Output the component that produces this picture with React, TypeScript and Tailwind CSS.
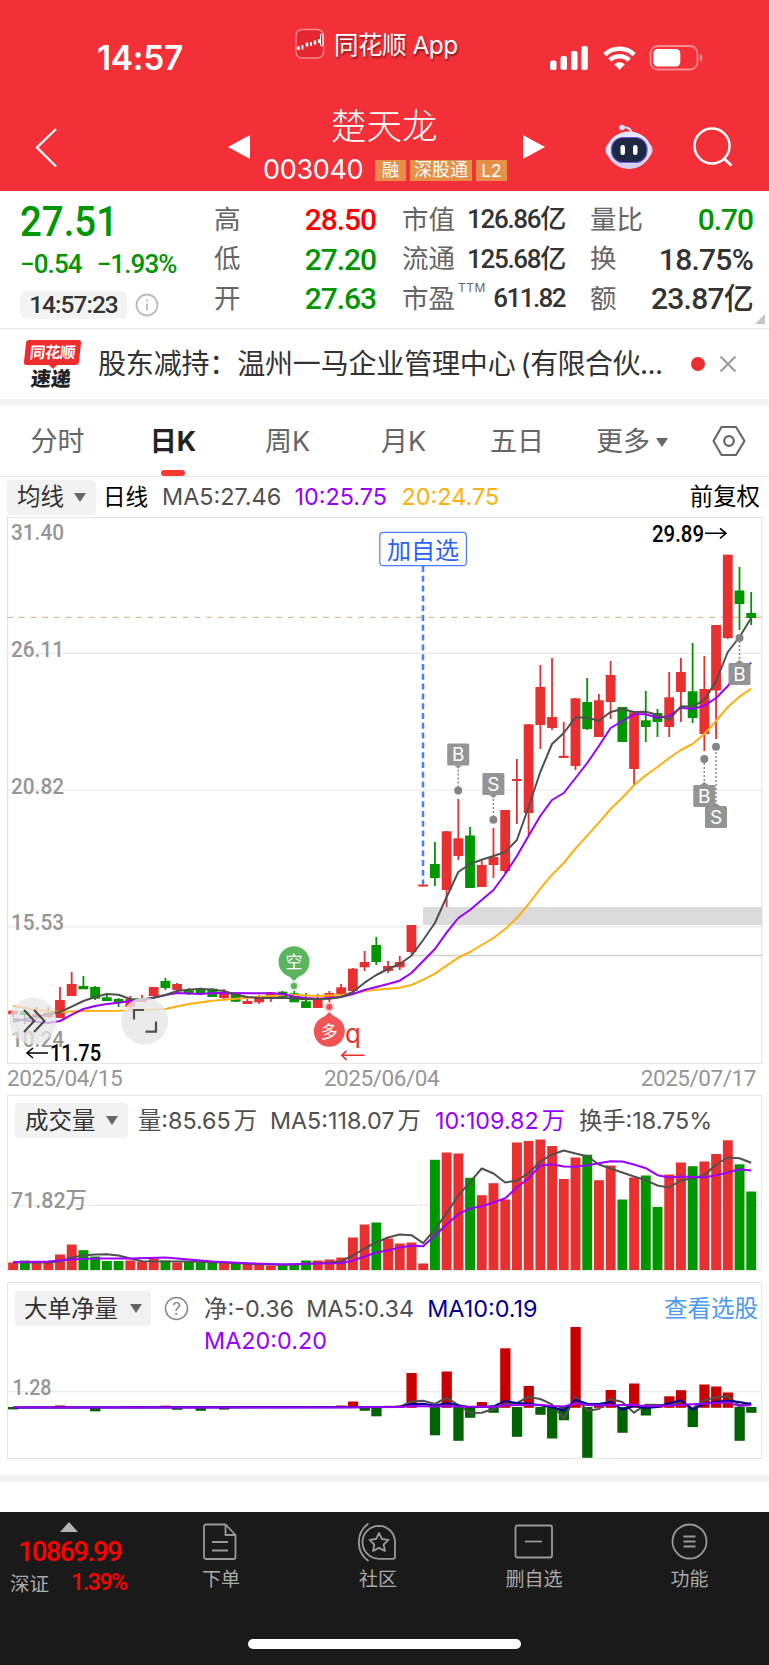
import type { ReactNode } from 'react';
import { clsx } from 'clsx';

const RED = '#e93030';
const GREEN = '#009600';
const GRAY = '#505050';
const PURPLE = '#9900ff';
const ORANGE = '#ffb010';

const STEP = 11.716;
const xAt = (i: number) => 13.1 + STEP * i;

type Dir = 'r' | 'g';
// [direction, high, low, body top, body bottom]
type Candle = [Dir, number, number, number, number];
type Point = [number, number];

const candles: Candle[] = [
    ['r', 1010, 1017, 1010.7, 1014.3],
    ['g', 1010, 1024, 1011.3, 1015],
    ['r', 1007, 1020, 1014, 1018],
    ['r', 1007, 1018, 1013, 1017],
    ['r', 987, 1018, 1000, 1018],
    ['r', 972, 996, 984, 996],
    ['g', 976, 989, 986, 989.3],
    ['g', 986, 1000, 987, 998.7],
    ['g', 995, 1001, 997.3, 1001],
    ['g', 998, 1007, 999, 1003],
    ['r', 996, 1009, 999, 1007],
    ['r', 995, 1002, 999, 1002],
    ['r', 987, 997, 987, 996],
    ['g', 978, 990, 981, 988],
    ['r', 983, 991, 984, 990],
    ['g', 988, 995, 990, 994],
    ['g', 989, 994, 990, 994],
    ['g', 988, 997, 988.7, 997],
    ['r', 989, 999, 992, 998],
    ['g', 993, 1002, 994, 1001.7],
    ['r', 999, 1004, 1001, 1004],
    ['r', 995, 1004, 998, 1002.3],
    ['r', 992, 1002, 992.3, 996.7],
    ['g', 991, 998, 991.7, 998],
    ['g', 991, 1002, 993.3, 1002.3],
    ['g', 993, 1008, 1001.3, 1008],
    ['r', 994, 1008, 998.7, 1008],
    ['r', 991, 1002, 993, 999],
    ['r', 984, 995, 987.3, 994],
    ['r', 968, 992, 968.7, 991],
    ['r', 951, 971, 962, 967.3],
    ['g', 937, 965, 945, 962],
    ['r', 961, 973, 966, 971],
    ['r', 956, 970, 962, 967.3],
    ['r', 925, 954, 925, 952],
    ['r', 884.5, 886.5, 884.5, 886.5],
    ['g', 842, 886, 864, 878],
    ['r', 831, 907, 831.3, 890],
    ['r', 799, 860, 838.3, 856],
    ['g', 827, 888, 835.5, 888],
    ['r', 861, 887, 865, 887],
    ['r', 828, 878, 857, 865],
    ['r', 810, 873, 810, 871],
    ['r', 759, 824, 779, 781],
    ['r', 724, 835, 724.3, 813],
    ['r', 665, 749, 687, 725],
    ['r', 658, 730, 717, 728],
    ['r', 722, 758, 755.8, 758],
    ['r', 698, 770, 698.3, 766],
    ['g', 678, 730, 702, 729],
    ['r', 694, 737, 700.3, 737],
    ['r', 661, 719, 675, 702],
    ['g', 707, 742, 707, 742],
    ['r', 712, 785, 712.3, 769],
    ['g', 691, 742, 720.3, 727],
    ['g', 709, 737, 713, 722],
    ['r', 672, 737, 697.3, 727],
    ['r', 658, 722, 672, 692],
    ['g', 643, 723, 691.3, 718],
    ['r', 656, 751, 689, 734],
    ['r', 625, 739, 625, 690.5],
    ['r', 554.7, 639, 554.7, 638],
    ['g', 567, 630, 590.5, 604],
    ['g', 592, 625, 613, 618],
];

const priceMa5: Point[] = [
    [0, 1021.7], [3, 1014], [4, 1012], [5, 1006.7], [6, 1001], [7, 997], [8, 994], [9, 994.7], [10, 999], [11, 999.5],
    [12, 997.7], [13, 995], [14, 991], [15, 989.7], [16, 988.7], [17, 989.7], [18, 991], [19, 994.7], [20, 997], [21, 998],
    [23, 997.7], [25, 999.3], [27, 998.7], [28, 997], [29, 992], [30, 982.7], [31, 975], [32, 969], [33, 964], [34, 955.7],
    [35, 940], [36, 923], [37, 897], [38, 872], [39, 864], [40, 859.7], [41, 856], [42, 852], [43, 840], [44, 807],
    [45, 772], [46, 744], [47, 733], [48, 717.3], [49, 717.7], [50, 720.7], [51, 712], [52, 709], [53, 712], [54, 711.7],
    [55, 714.7], [56, 719.7], [57, 706.3], [58, 706.7], [59, 700], [60, 681], [61, 652], [62, 637], [63, 618],
];
const priceMa10: Point[] = [
    [0, 1019], [3, 1023], [4, 1021], [5, 1014.7], [6, 1009], [7, 1006], [8, 1004], [9, 1002.7], [10, 1001], [11, 999.7],
    [12, 997.7], [13, 995], [14, 993], [16, 994], [17, 993], [22, 993.3], [23, 994], [24, 996.7], [25, 998], [26, 998.7],
    [27, 998], [28, 997], [29, 994], [30, 990], [31, 987], [32, 984], [33, 980.7], [34, 973], [35, 961], [36, 949],
    [37, 932.7], [38, 918], [39, 910], [40, 900], [41, 890], [42, 874], [43, 856], [44, 835.7], [45, 816], [46, 800],
    [47, 793], [48, 778], [49, 763], [50, 746], [51, 728], [52, 721], [53, 714.3], [54, 714.3], [55, 717.7], [56, 716],
    [57, 707.7], [58, 709], [59, 705.7], [60, 698], [61, 686], [62, 672], [63, 662.7],
];
const priceMa20: Point[] = [
    [0, 1006], [2, 1010], [4, 1012], [6, 1011], [9, 1010.7], [11, 1009.7], [13, 1009], [15, 1004], [17, 1000.7], [19, 998.7],
    [21, 996.7], [23, 995], [24, 995], [26, 996], [28, 995], [29, 993.7], [30, 991], [31, 989.7], [33, 987.7], [34, 985],
    [35, 979.7], [36, 973.7], [37, 965.7], [38, 957.7], [39, 952], [40, 945], [41, 938], [42, 929], [43, 918], [44, 904],
    [45, 888.7], [46, 874.7], [47, 863], [48, 848.5], [49, 835.7], [50, 822.7], [51, 809], [52, 797.7], [53, 785.3], [54, 775.3],
    [55, 767], [56, 758], [57, 750], [58, 744], [59, 734], [60, 721], [61, 707], [62, 696.7], [63, 688.7],
];

const volumes: [Dir, number][] = [
    ['r', 1262], ['g', 1260], ['r', 1262], ['r', 1261], ['r', 1254], ['r', 1244], ['g', 1249.7], ['g', 1256],
    ['g', 1260.5], ['g', 1260.5], ['r', 1260], ['r', 1261], ['r', 1258], ['g', 1260], ['r', 1262], ['g', 1261],
    ['g', 1262], ['g', 1262], ['r', 1262], ['g', 1263], ['r', 1263], ['r', 1264], ['r', 1265], ['g', 1264],
    ['g', 1264], ['g', 1260], ['r', 1260], ['r', 1259], ['r', 1257], ['r', 1237], ['r', 1224], ['g', 1222],
    ['r', 1238], ['r', 1243], ['r', 1242], ['r', 1263], ['g', 1159.3], ['r', 1152], ['r', 1153], ['g', 1177.3],
    ['r', 1194.7], ['r', 1182.7], ['r', 1199], ['r', 1142], ['r', 1140.5], ['r', 1139], ['r', 1145.5], ['r', 1178.5],
    ['r', 1157], ['g', 1154.2], ['r', 1179.7], ['r', 1165], ['g', 1199], ['r', 1177], ['g', 1175], ['g', 1206.5],
    ['r', 1174], ['r', 1162], ['g', 1165.7], ['r', 1161], ['r', 1153.5], ['r', 1139.8], ['g', 1163.8], ['g', 1191],
];
const volMa5: Point[] = [
    [0, 1261.7], [3, 1262], [4, 1261], [5, 1257], [6, 1255], [7, 1254], [8, 1253.7], [9, 1255], [10, 1258], [11, 1260.7],
    [15, 1261], [18, 1262], [20, 1263.3], [22, 1264], [24, 1264], [26, 1262.7], [27, 1262], [28, 1261], [29, 1255], [30, 1248],
    [31, 1241.7], [32, 1237], [33, 1234], [34, 1234.7], [35, 1242.7], [36, 1229], [37, 1212.7], [38, 1195], [39, 1181.7], [40, 1168],
    [41, 1173], [42, 1182], [43, 1180], [44, 1172.7], [45, 1161], [46, 1154], [47, 1150], [48, 1153], [49, 1155.7], [50, 1164],
    [51, 1168], [52, 1172], [53, 1176], [54, 1179.7], [55, 1185], [56, 1187], [57, 1180], [58, 1177.7], [59, 1175], [60, 1164],
    [61, 1157], [62, 1157.7], [63, 1162.3],
];
const volMa10: Point[] = [
    [0, 1261.7], [3, 1261], [5, 1259], [7, 1258], [10, 1258], [13, 1257], [14, 1258], [15, 1259], [17, 1261], [20, 1262.7],
    [23, 1264], [26, 1263], [28, 1262.7], [29, 1260], [30, 1256], [31, 1252], [32, 1250], [33, 1247], [34, 1245.3], [35, 1245.7],
    [36, 1235], [37, 1224], [38, 1213.7], [39, 1208], [40, 1205.7], [41, 1202], [42, 1197.7], [43, 1187], [44, 1177.7], [45, 1165],
    [46, 1163.7], [47, 1166], [48, 1166.3], [49, 1164.7], [50, 1162.7], [51, 1160.7], [52, 1161], [53, 1164], [54, 1167.7], [55, 1174.7],
    [56, 1177], [57, 1176], [59, 1177], [60, 1174.7], [61, 1172], [62, 1168.7], [63, 1170],
];

// net order flow: slot index -> bar end, measured from the zero line
const netFlow: Point[] = [
    [0, 1408.6], [2, 1406.7], [4, 1405.5], [7, 1410.6], [10, 1406.5], [11, 1406], [13, 1405.7], [14, 1409], [16, 1410], [18, 1408.8],
    [26, 1406.5], [28, 1405.5], [29, 1401.5], [30, 1410], [31, 1415.5], [32, 1405.8], [33, 1405.5], [34, 1373], [36, 1434.5], [37, 1371.5],
    [38, 1440], [39, 1417], [40, 1402], [41, 1412], [42, 1348.3], [43, 1436], [44, 1386], [45, 1414], [46, 1437.7], [47, 1419.5],
    [48, 1327], [49, 1457], [50, 1405], [51, 1390], [52, 1432], [53, 1383.5], [54, 1414.7], [55, 1406], [56, 1396.3], [57, 1390.2],
    [58, 1426.3], [59, 1384.5], [60, 1386.5], [61, 1392.5], [62, 1440], [63, 1412],
];
const netMa5: Point[] = [
    [0, 1407.5], [33, 1407], [34, 1401.5], [35, 1400.7], [36, 1404], [37, 1397.7], [38, 1405], [39, 1413], [40, 1412.7], [41, 1409],
    [42, 1404.3], [43, 1403], [44, 1397], [45, 1399], [46, 1404.3], [47, 1418.7], [48, 1397], [49, 1410.7], [50, 1409], [51, 1399],
    [52, 1402], [53, 1412.7], [54, 1404.7], [56, 1405], [57, 1401], [58, 1408.3], [59, 1400.3], [60, 1397.3], [61, 1396.3], [62, 1405],
    [63, 1403],
];
const netMa10: Point[] = [
    [0, 1407.5], [33, 1407], [34, 1404], [35, 1403.7], [36, 1405.7], [37, 1403], [38, 1405.3], [39, 1407.3], [41, 1406.3], [42, 1401],
    [43, 1403], [44, 1403.7], [45, 1405.3], [46, 1407.3], [47, 1410.7], [48, 1399.7], [49, 1403.7], [50, 1404], [51, 1402], [52, 1409.7],
    [53, 1405.7], [54, 1408], [55, 1407], [56, 1403.3], [57, 1400.3], [58, 1409.7], [59, 1403.7], [60, 1401.7], [61, 1400.7], [62, 1402],
    [63, 1404.3],
];
const netMa20: Point[] = [
    [0, 1407.5], [28, 1407.5], [33, 1407], [34, 1406], [36, 1406.5], [37, 1406], [38, 1406.6], [41, 1407], [42, 1405.3], [45, 1404.7],
    [46, 1406], [47, 1406.5], [48, 1403.3], [49, 1405], [50, 1405.5], [53, 1404.7], [54, 1406.2], [56, 1405.5], [60, 1403], [61, 1402.3],
    [62, 1406], [63, 1405],
];

const color = (d: Dir) => (d === 'r' ? RED : GREEN);

const Line = ({ data, stroke }: { data: Point[]; stroke: string }) => (
    <polyline
        points={data.map(([i, y]) => `${xAt(i).toFixed(1)},${y}`).join(' ')}
        fill="none"
        stroke={stroke}
        strokeWidth={2}
        strokeLinejoin="round"
    />
);

interface TradeMarkProps {
    x: number;
    dotY: number;
    boxY: number;
    label: string;
}

const TradeMark = ({ x, dotY, boxY, label }: TradeMarkProps) => {
    const above = boxY < dotY;
    const edge = above ? boxY + 22 : boxY;
    const tip = above ? edge + 3 : edge - 3;
    return (
        <g>
            <line x1={x} x2={x} y1={edge} y2={dotY} stroke="#8a8a8a" strokeWidth={1.5} strokeDasharray="2 2" />
            <circle cx={x} cy={dotY} r={4} fill="#858585" />
            <path d={`M${x - 4} ${edge}L${x} ${tip}L${x + 4} ${edge}Z`} fill="#8e8e8e" />
            <rect x={x - 11} y={boxY} width={22} height={22} rx={1.5} fill="#8e8e8e" fillOpacity={0.95} />
            <text x={x} y={boxY + 17.7} textAnchor="middle" fontSize={19} fill="#fff" className="font-['Inter',sans-serif]">
                {label}
            </text>
        </g>
    );
};

const CJK = "font-['Inter','Noto_Sans_CJK_SC',sans-serif]";
const NUM = "font-['Roboto','Noto_Sans_CJK_SC',sans-serif]";

const PriceChart = () => (
    <svg width={769} height={547} viewBox="0 517 769 547" className="block shrink-0">
        <rect x={7.5} y={517.5} width={754.5} height={546} fill="none" stroke="#e6e6e6" strokeWidth={1.3} />
        {[653.4, 790.2, 926.8].map((y) => (
            <line key={y} x1={8} x2={762} y1={y} y2={y} stroke="#ebebeb" strokeWidth={1.2} />
        ))}
        <rect x={423} y={907} width={339} height={18} fill="#dbdbdb" />
        <line x1={412} x2={762} y1={955.5} y2={955.5} stroke="#cfcfcf" strokeWidth={1.3} />
        <line x1={7} x2={762} y1={617.3} y2={617.3} stroke="#d9bf98" strokeWidth={1.3} strokeDasharray="6 5.7" />

        <g fontSize={22.5} fill="#969696" fontWeight={500} className={NUM}>
            <text x={11} y={539.5} textLength={53} lengthAdjust="spacingAndGlyphs">31.40</text>
            <text x={11} y={656.5} textLength={53} lengthAdjust="spacingAndGlyphs">26.11</text>
            <text x={11} y={793.5} textLength={53} lengthAdjust="spacingAndGlyphs">20.82</text>
            <text x={11} y={929.5} textLength={53} lengthAdjust="spacingAndGlyphs">15.53</text>
            <text x={11} y={1046.5} textLength={53} lengthAdjust="spacingAndGlyphs">10.24</text>
        </g>

        {candles.map(([d, high, low, top, bottom], i) => (
            <g key={i} fill={color(d)}>
                <rect x={xAt(i) - 0.9} y={high} width={1.8} height={low - high} />
                <rect x={xAt(i) - 4.9} y={top} width={9.8} height={bottom - top} />
            </g>
        ))}
        <Line data={priceMa20} stroke={ORANGE} />
        <Line data={priceMa10} stroke={PURPLE} />
        <Line data={priceMa5} stroke={GRAY} />

        <line x1={423} x2={423} y1={566} y2={884} stroke="#4a7dff" strokeWidth={2.5} strokeDasharray="6 3.8" />
        <rect x={379.8} y={532.3} width={86.6} height={33.4} rx={3.5} fill="#fff" stroke="#4a7dff" strokeWidth={1.2} />
        <text x={387} y={558.5} fontSize={24} textLength={72} fill="#2a63f5" className={CJK}>加自选</text>

        <TradeMark x={458.2} dotY={790.5} boxY={743.5} label="B" />
        <TradeMark x={493.4} dotY={819.7} boxY={773} label="S" />
        <TradeMark x={704.3} dotY={759} boxY={785} label="B" />
        <TradeMark x={716} dotY={746.7} boxY={806} label="S" />
        <TradeMark x={739.5} dotY={638} boxY={663} label="B" />

        {/* short / long signals */}
        <circle cx={294} cy={986} r={5} fill="#52b256" fillOpacity={0.25} />
        <circle cx={294} cy={986} r={3} fill="#52b256" />
        <path d="M289 976L294 981L299 976Z" fill="#52b256" />
        <circle cx={294} cy={961.8} r={15.5} fill="#5ab55e" />
        <text x={294} y={968} textAnchor="middle" fontSize={17} fill="#fff" className={CJK}>空</text>
        <circle cx={329.3} cy={1007} r={5} fill={RED} fillOpacity={0.25} />
        <circle cx={329.3} cy={1007} r={3} fill="#f05050" />
        <path d="M324 1017L329.3 1012L334.6 1017Z" fill="#f05454" />
        <circle cx={329.3} cy={1031.2} r={15.5} fill="#f05454" />
        <text x={329.3} y={1037.5} textAnchor="middle" fontSize={17} fill="#fff" className={CJK}>多</text>
        <text x={345} y={1043} fontSize={26} fill={RED} className="font-['Inter',sans-serif]">q</text>
        <path d="M364.5 1055.3H342M346.5 1050.8L341.8 1055.3L346.5 1059.8" fill="none" stroke={RED} strokeWidth={1.6} />

        <g fontSize={23.5} fontWeight={500} className={NUM}>
            <text x={652} y={541.5} textLength={52} lengthAdjust="spacingAndGlyphs">29.89</text>
            <text x={50} y={1060.5} textLength={51} lengthAdjust="spacingAndGlyphs">11.75</text>
        </g>
        <path d="M705 533.3H726M720 528.3L726 533.3L720 538.3" fill="none" stroke="#000" strokeWidth={1.6} />
        <path d="M48 1053H27M33 1048L27 1053L33 1058" fill="none" stroke="#000" strokeWidth={1.6} />

        {/* floating controls */}
        <circle cx={33} cy={1021} r={23.5} fill="#e6e6e6" fillOpacity={0.75} />
        <path d="M24 1010L34.3 1021L24 1032M34 1010L44.5 1021L34 1032" fill="none" stroke="#444" strokeWidth={2} />
        <circle cx={144.7} cy={1021} r={23.5} fill="#e6e6e6" fillOpacity={0.8} />
        <path d="M134 1019.5V1010H144M145.5 1031.7H156V1021.5" fill="none" stroke="#505050" strokeWidth={2.2} />
    </svg>
);

const VolumeChart = () => (
    <svg width={769} height={142} viewBox="0 1129.5 769 142" className="block">
        <line x1={8} x2={762} y1={1204.9} y2={1204.9} stroke="#ebebeb" strokeWidth={1.2} />
        <text x={11} y={1207.5} fontSize={22.5} fontWeight={500} textLength={76} lengthAdjust="spacingAndGlyphs" fill="#969696" className={NUM}>
            71.82万
        </text>
        {volumes.map(([d, top], i) => (
            <rect key={i} x={xAt(i) - 4.9} y={top} width={9.9} height={1270 - top} fill={color(d)} />
        ))}
        <Line data={volMa5} stroke={GRAY} />
        <Line data={volMa10} stroke={PURPLE} />
    </svg>
);

const NetFlowChart = () => (
    <svg width={769} height={132} viewBox="0 1326 769 132" className="block">
        <line x1={8} x2={762} y1={1391.7} y2={1391.7} stroke="#ebebeb" strokeWidth={1.2} />
        <text x={12.5} y={1395} fontSize={22.5} fontWeight={500} textLength={39} lengthAdjust="spacingAndGlyphs" fill="#969696" className={NUM}>
            1.28
        </text>
        {netFlow.map(([i, end]) => (
            <rect
                key={i}
                x={xAt(i) - 5}
                y={Math.min(end, 1407)}
                width={10.3}
                height={Math.abs(end - 1407) + 0.8}
                fill={end < 1407 ? '#c80000' : '#006400'}
            />
        ))}
        <Line data={netMa5} stroke={GRAY} />
        <Line data={netMa10} stroke="#000096" />
        <Line data={netMa20} stroke={PURPLE} />
    </svg>
);

const Caret = ({ className }: { className?: string }) => (
    <span
        className={clsx(
            'inline-block h-0 w-0 border-x-[6px] border-t-[9px] border-x-transparent border-t-[#666]',
            className,
        )}
    />
);

const IndicatorButton = ({ children, className }: { children: ReactNode; className?: string }) => (
    <button className={clsx('flex h-[35px] shrink-0 items-center justify-between rounded bg-[#f2f2f2] text-[23.5px] text-[#333]', className)}>
        {children}
        <Caret />
    </button>
);

const StatusBar = () => (
    <div className="flex h-[110px] items-start text-white">
        <span className="mt-[37px] ml-[97px] w-[198px] text-[33.5px] leading-[42px] font-semibold tracking-[-0.01em]">14:57</span>
        <svg width={30} height={32} viewBox="0 0 30 32" className="mt-[28px]">
            <rect x={1} y={1.5} width={27.5} height={28.5} rx={6} fill="#e5262e" stroke="#f58a8c" strokeWidth={1.4} />
            <path d="M3.5 18.5v3.5M12 14.5v4M20 12.5v4" stroke="#fff" strokeWidth={2.4} />
            <path d="M7.500 17v4.500M16 14v4M24 11v4" stroke="#fff" strokeWidth={1.8} />
            <rect x={25.5} y={6} width={2.4} height={12} rx={1} fill="none" stroke="#fff" strokeWidth={1} />
        </svg>
        <span className="mt-[26px] ml-[9px] w-[208px] text-[24.5px] leading-[38px] tracking-[-0.02em] [text-shadow:1px_2px_2px_rgba(0,0,0,0.45)]">
            同花顺 App
        </span>
        <svg width={156} height={26} viewBox="0 0 156 26" className="mt-[45px] ml-[7px]">
            <g fill="#fff">
                <rect x={1} y={15.5} width={6.5} height={9.5} rx={2} />
                <rect x={11.5} y={11} width={6.5} height={14} rx={2} />
                <rect x={22} y={6} width={6.5} height={19} rx={2} />
                <rect x={32.3} y={1} width={6.5} height={24} rx={2} />
            </g>
            <path d="M55.8 9.6a21.5 21.5 0 0 1 29.4 0M60.8 15.2a14 14 0 0 1 19.4 0" fill="none" stroke="#fff" strokeWidth={4.6} />
            <path d="M70.5 25l-5.3-5.7a8 8 0 0 1 10.6 0z" fill="#fff" />
            <rect x={101.5} y={1} width={47} height={23.5} rx={7.5} fill="none" stroke="#fff" strokeOpacity={0.45} strokeWidth={1.8} />
            <rect x={104.3} y={4} width={27} height={17.6} rx={4.5} fill="#fff" />
            <path d="M151 9v7.5q2.4-1.2 2.4-3.7t-2.4-3.8z" fill="#fff" fillOpacity={0.5} />
        </svg>
    </div>
);

const Robot = () => (
    <svg width={50} height={46} viewBox="0 0 50 46">
        <path d="M17.5 3.5c5-1 10 1 10 6" fill="none" stroke="#d9d7f5" strokeWidth={2} />
        <circle cx={18} cy={3.5} r={2.8} fill="#dddcf8" />
        <rect x={1.5} y={19} width={47} height={14} rx={6} fill="#c9c8ee" />
        <ellipse cx={25} cy={26} rx={22} ry={18.5} fill="#e6e5fa" />
        <path d="M5 33q7 12 20 12t20-12q-8 7-20 7T5 33z" fill="#d2d0f0" />
        <rect x={7.5} y={13.5} width={35.5} height={25} rx={11.5} fill="#1d2845" stroke="#6c55d8" strokeWidth={1.2} />
        <rect x={16.5} y={21} width={4.5} height={10} rx={2.2} fill="#fff" />
        <rect x={29} y={21} width={4.5} height={10} rx={2.2} fill="#fff" />
    </svg>
);

const TitleBar = () => (
    <div className="flex h-[81px] items-start text-white">
        <svg width={24} height={42} viewBox="0 0 24 42" className="mt-[17px] ml-[34px]">
            <path d="M22 2L3 20.5L22 39.5" fill="none" stroke="#fff" strokeWidth={2.3} />
        </svg>
        <svg width={24} height={26} viewBox="0 0 24 26" className="mt-[24px] ml-[169px]">
            <path d="M23 1v24L1 13z" fill="#fff" />
        </svg>
        <div className="ml-[12px] flex w-[246px] flex-col">
            <h1 className="pl-[68px] text-[35.5px] leading-[34px] font-light">楚天龙</h1>
            <div className="mt-[15px] flex items-center gap-[4px]">
                <span className="mr-[8px] w-[100px] text-[27px] leading-[22px] tracking-[-0.012em]">003040</span>
                <span className="h-[21px] w-[31px] bg-[#e49048] text-center text-[17.5px] leading-[20px]">融</span>
                <span className="h-[21px] w-[62px] bg-[#e49048] text-center text-[18px] leading-[20px]">深股通</span>
                <span className="h-[21px] w-[31px] bg-[#e49048] text-center text-[17.5px] leading-[21px]">L2</span>
            </div>
        </div>
        <svg width={24} height={26} viewBox="0 0 24 26" className="mt-[24px] ml-[13px]">
            <path d="M1 1v24L23 13z" fill="#fff" />
        </svg>
        <div className="mt-[14px] ml-[58px]">
            <Robot />
        </div>
        <svg width={44} height={44} viewBox="0 0 44 44" className="mt-[16px] ml-[39px]">
            <circle cx={19} cy={20} r={17.5} fill="none" stroke="#fff" strokeWidth={2.5} />
            <path d="M31 32.5L38.5 39.5" stroke="#fff" strokeWidth={2.8} />
        </svg>
    </div>
);

interface QuoteCellProps {
    label: string;
    sup?: string;
    value: string;
    valueClass: string;
}

const QuoteCell = ({ label, sup, value, valueClass }: QuoteCellProps) => (
    <div className="flex h-[39.5px] items-center justify-between whitespace-nowrap">
        <span className="flex text-[26.5px] text-[#666]">
            {label}
            {sup && <sup className="top-0 mt-[3px] ml-[3px] self-start text-[12px] leading-[12px] tracking-[0.04em]">{sup}</sup>}
        </span>
        <span className={clsx("font-['Roboto','Noto_Sans_CJK_SC',sans-serif] font-medium", valueClass)}>{value}</span>
    </div>
);

const QuotePanel = () => (
    <section className="relative flex h-[138px] shrink-0 border-b border-[#e6e6e6] pt-[9px]">
        <div className="ml-[20px] w-[194px] font-['Roboto',sans-serif] font-medium text-[#009600]">
            <div className="origin-left scale-x-[0.915] pt-[2px] text-[42px] leading-[40px]">27.51</div>
            <div className="mt-[2px] flex gap-[15px] text-[26px] leading-[40px] tracking-[-0.035em] whitespace-nowrap">
                <span>−0.54</span>
                <span>−1.93%</span>
            </div>
            <div className="mt-[7px] flex items-center">
                <span className="flex h-[28px] w-[107px] items-center justify-center rounded-md bg-[#f4f4f4] text-[24.5px] tracking-[-0.04em] text-[#333]">
                    14:57:23
                </span>
                <svg width={24} height={24} viewBox="0 0 24 24" className="ml-[8px]">
                    <circle cx={12} cy={12} r={10.5} fill="none" stroke="#bbb" strokeWidth={1.8} />
                    <path d="M12 10.5v7M12 6.5v2" stroke="#bbb" strokeWidth={1.8} />
                </svg>
            </div>
        </div>
        <div className="w-[162px]">
            <QuoteCell label="高" value="28.50" valueClass="text-[30px] tracking-[-0.035em] text-[#f00]" />
            <QuoteCell label="低" value="27.20" valueClass="text-[30px] tracking-[-0.035em] text-[#009600]" />
            <QuoteCell label="开" value="27.63" valueClass="text-[30px] tracking-[-0.035em] text-[#009600]" />
        </div>
        <div className="ml-[26px] w-[163px]">
            <QuoteCell label="市值" value="126.86亿" valueClass="text-[26px] tracking-[-0.05em] text-[#333]" />
            <QuoteCell label="流通" value="125.68亿" valueClass="text-[26px] tracking-[-0.05em] text-[#333]" />
            <QuoteCell label="市盈" sup="TTM" value="611.82" valueClass="text-[26px] tracking-[-0.06em] text-[#333]" />
        </div>
        <div className="ml-[25px] w-[163px]">
            <QuoteCell label="量比" value="0.70" valueClass="text-[30px] tracking-[-0.035em] text-[#009600]" />
            <QuoteCell label="换" value="18.75%" valueClass="text-[30px] tracking-[-0.025em] text-[#333]" />
            <QuoteCell label="额" value="23.87亿" valueClass="text-[30px] tracking-[-0.025em] text-[#333]" />
        </div>
        <span className="absolute right-[4px] bottom-[4px] h-0 w-0 border-b-[10px] border-l-[10px] border-b-[#c4c4c4] border-l-transparent" />
    </section>
);

const NewsBar = () => (
    <section className="flex h-[70px] shrink-0 items-center">
        <div className="ml-[24px] flex w-[57px] flex-col items-center">
            <div className="flex h-[25px] w-[55px] -skew-x-6 items-center justify-center rounded-[3px] bg-[#ee2c2e] text-[15.5px] font-bold tracking-[-0.03em] text-white">
                同花顺
            </div>
            <span className="h-0 w-0 border-x-[4px] border-t-[4px] border-x-transparent border-t-[#ee2c2e]" />
            <span className="mr-[4px] -skew-x-6 text-[20px] leading-[20px] font-black text-[#222]">速递</span>
        </div>
        <p className="ml-[17px] flex w-[585px] text-[28px] tracking-[-0.006em] whitespace-nowrap text-[#333]">
            股东减持：温州一马企业管理中心
            <span className="ml-[5px] tracking-[-0.02em]">(有限合伙...</span>
        </p>
        <span className="ml-[8px] h-[14px] w-[14px] rounded-full bg-[#e93030]" />
        <svg width={18} height={18} viewBox="0 0 18 18" className="ml-[14px]">
            <path d="M1.5 1.5L16.5 16.5M16.5 1.5L1.5 16.5" stroke="#999" strokeWidth={2} />
        </svg>
    </section>
);

const periods = [
    { label: '分时', width: 'w-[115px]' },
    { label: '日K', width: 'w-[116px]', active: true },
    { label: '周K', width: 'w-[113px]' },
    { label: '月K', width: 'w-[119px]' },
    { label: '五日', width: 'w-[108px]' },
];

const PeriodTabs = () => (
    <nav className="flex h-[71px] shrink-0 border-b border-[#e8e8e8] text-[27px] text-[#666]">
        {periods.map((p) => (
            <div key={p.label} className={clsx('flex flex-col items-center', p.width)}>
                <span className={clsx('h-[64px] leading-[72px]', p.active && 'font-bold text-[#222]')}>{p.label}</span>
                {p.active && <span className="h-[6px] w-[24px] rounded-full bg-[#fa3a30]" />}
            </div>
        ))}
        <div className="ml-[25px] flex h-[72px] w-[116px] items-center">
            更多
            <Caret className="ml-[6px]" />
        </div>
        <svg width={34} height={32} viewBox="0 0 34 32" className="mt-[19px]">
            <path d="M9.5 2h14.5L32.5 16L24 30H9.5L1.5 16z" fill="none" stroke="#666" strokeWidth={2.1} strokeLinejoin="round" />
            <circle cx={17} cy={16} r={4.8} fill="none" stroke="#666" strokeWidth={2.2} />
        </svg>
    </nav>
);

const NavItem = ({ label, className, children }: { label: string; className: string; children: ReactNode }) => (
    <div className={clsx('flex flex-col items-center pt-[10px]', className)}>
        <svg width={40} height={40} viewBox="0 0 40 40" fill="none" stroke="#999" strokeWidth={1.8}>
            {children}
        </svg>
        <span className="mt-[5px] leading-[26px]">{label}</span>
    </div>
);

const BottomNav = () => (
    <nav className="flex h-[153px] shrink-0 flex-col bg-[#1a1a1a] text-[#aaa]">
        <div className="flex h-[127px] text-[19px]">
            <div className="flex w-[143px] flex-col pt-[10px]">
                <span className="ml-[60px] h-0 w-0 border-x-[9px] border-b-[10px] border-x-transparent border-b-[#b4b4b4]" />
                <span className="mt-[5px] ml-[18px] font-['Roboto',sans-serif] text-[27.5px] leading-[30px] font-medium tracking-[-0.065em] text-[#f00]">
                    10869.99
                </span>
                <div className="flex items-center leading-[30px]">
                    <span className="mt-[2px] ml-[10px] w-[61px] text-[19.5px]">深证</span>
                    <span className="font-['Roboto',sans-serif] text-[23px] font-medium tracking-[-0.06em] text-[#f00]">1.39%</span>
                </div>
            </div>
            <NavItem label="下单" className="w-[156px]">
                <path d="M5 2.500H24.500L34.500 13V35a2 2 0 0 1-2 2H5a2 2 0 0 1-2-2V4.500a2 2 0 0 1 2-2zM24.500 2.500V13H34.500M11 20H27M11 28.500H27" />
            </NavItem>
            <NavItem label="社区" className="w-[158px]">
                <path d="M21 3.800a16.500 16.500 0 0 0 0 33H35a2 2 0 0 0 2-2V20.300A16.300 16.300 0 0 0 21 3.800zM10.500 1.500A23 23 0 0 0 10.500 39" />
                <path d="M21 11l2.900 6 6.600.9-4.800 4.600 1.200 6.500L21 25.900l-5.900 3.100 1.200-6.500-4.800-4.600 6.600-.9z" strokeLinejoin="round" />
            </NavItem>
            <NavItem label="删自选" className="w-[154px]">
                <rect x={1.5} y={3.5} width={36.5} height={32} rx={2} />
                <path d="M11 19.5H28" />
            </NavItem>
            <NavItem label="功能" className="w-[157px]">
                <circle cx={19.5} cy={19.5} r={17} />
                <path d="M13.500 14.500H25.500M13.500 19.500H25.500M13.500 24.500H25.500" />
            </NavItem>
        </div>
        <span className="mx-auto h-[10px] w-[273px] rounded-full bg-white" />
    </nav>
);

export default function App() {
    return (
        <main className="flex h-[1665px] w-[769px] flex-col overflow-hidden bg-white font-['Inter','Noto_Sans_CJK_SC',sans-serif]">
            <header className="h-[191px] shrink-0 bg-[#f32f38]">
                <StatusBar />
                <TitleBar />
            </header>
            <QuotePanel />
            <NewsBar />
            <div className="h-[7px] shrink-0 bg-[#f4f4f4]" />
            <PeriodTabs />

            <div className="flex h-[40px] shrink-0 items-center pl-[7px] text-[23.4px] whitespace-nowrap">
                <IndicatorButton className="w-[89px] px-[10px]">均线</IndicatorButton>
                <span className="ml-[7px] w-[59px] text-[22.5px]">日线</span>
                <span className="w-[132.5px] text-[#505050]">MA5:27.46</span>
                <span className="w-[107px] text-[#9900ff]">10:25.75</span>
                <span className="text-[#ffb010]">20:24.75</span>
                <span className="mr-[9px] ml-auto">前复权</span>
            </div>

            <PriceChart />

            <div className="flex h-[30px] shrink-0 items-center justify-between pr-[13px] pl-[7px] font-['Roboto',sans-serif] text-[22.5px] tracking-[-0.02em] text-[#969696]">
                <span>2025/04/15</span>
                <span>2025/06/04</span>
                <span>2025/07/17</span>
            </div>

            <section className="relative mt-[1px] h-[176px] shrink-0">
                <div className="absolute inset-y-0 right-[7px] left-[7px] border border-[#e6e6e6]" />
                <div className="relative flex h-[35px] items-start pt-[8px] pl-[15px] text-[23.3px] leading-[36px] whitespace-nowrap text-[#505050]">
                    <IndicatorButton className="w-[113px] px-[10px]">成交量</IndicatorButton>
                    <span className="ml-[10px] w-[132px]">量:85.65<span className="ml-[3px]">万</span></span>
                    <span className="w-[165px]">MA5:118.07<span className="ml-[3px]">万</span></span>
                    <span className="w-[144px] text-[#9900ff]">10:109.82<span className="ml-[3px]">万</span></span>
                    <span>换手:18.75%</span>
                </div>
                <VolumeChart />
            </section>

            <section className="relative mt-[11px] h-[177px] shrink-0">
                <div className="absolute inset-y-0 right-[7px] left-[7px] border border-[#e6e6e6]" />
                <div className="relative flex h-[44px] items-start pt-[9px] pl-[15px] text-[23.4px] leading-[35px] text-[#505050]">
                    <IndicatorButton className="w-[136px] px-[9px]">大单净量</IndicatorButton>
                    <svg width={25} height={25} viewBox="0 0 25 25" className="mt-[5px] ml-[13px]">
                        <circle cx={12.5} cy={12.5} r={11} fill="none" stroke="#888" strokeWidth={1.5} />
                        <text x={12.5} y={18.5} textAnchor="middle" fontSize={17} fill="#888">?</text>
                    </svg>
                    <div className="mt-[2px] ml-[15px] flex w-[400px] flex-wrap gap-x-[12px] leading-[32px]">
                        <span>净:-0.36</span>
                        <span>MA5:0.34</span>
                        <span className="ml-[1px] text-[#000096]">MA10:0.19</span>
                        <span className="text-[#9900ff]">MA20:0.20</span>
                    </div>
                    <span className="mr-[11px] ml-auto text-[23.5px] whitespace-nowrap text-[#4a9af0]">查看选股</span>
                </div>
                <div className="relative">
                    <NetFlowChart />
                </div>
            </section>

            <div className="mt-[16px] h-[7px] shrink-0 bg-[#f4f4f4]" />
            <div className="h-[30px] shrink-0" />
            <BottomNav />
        </main>
    );
}
